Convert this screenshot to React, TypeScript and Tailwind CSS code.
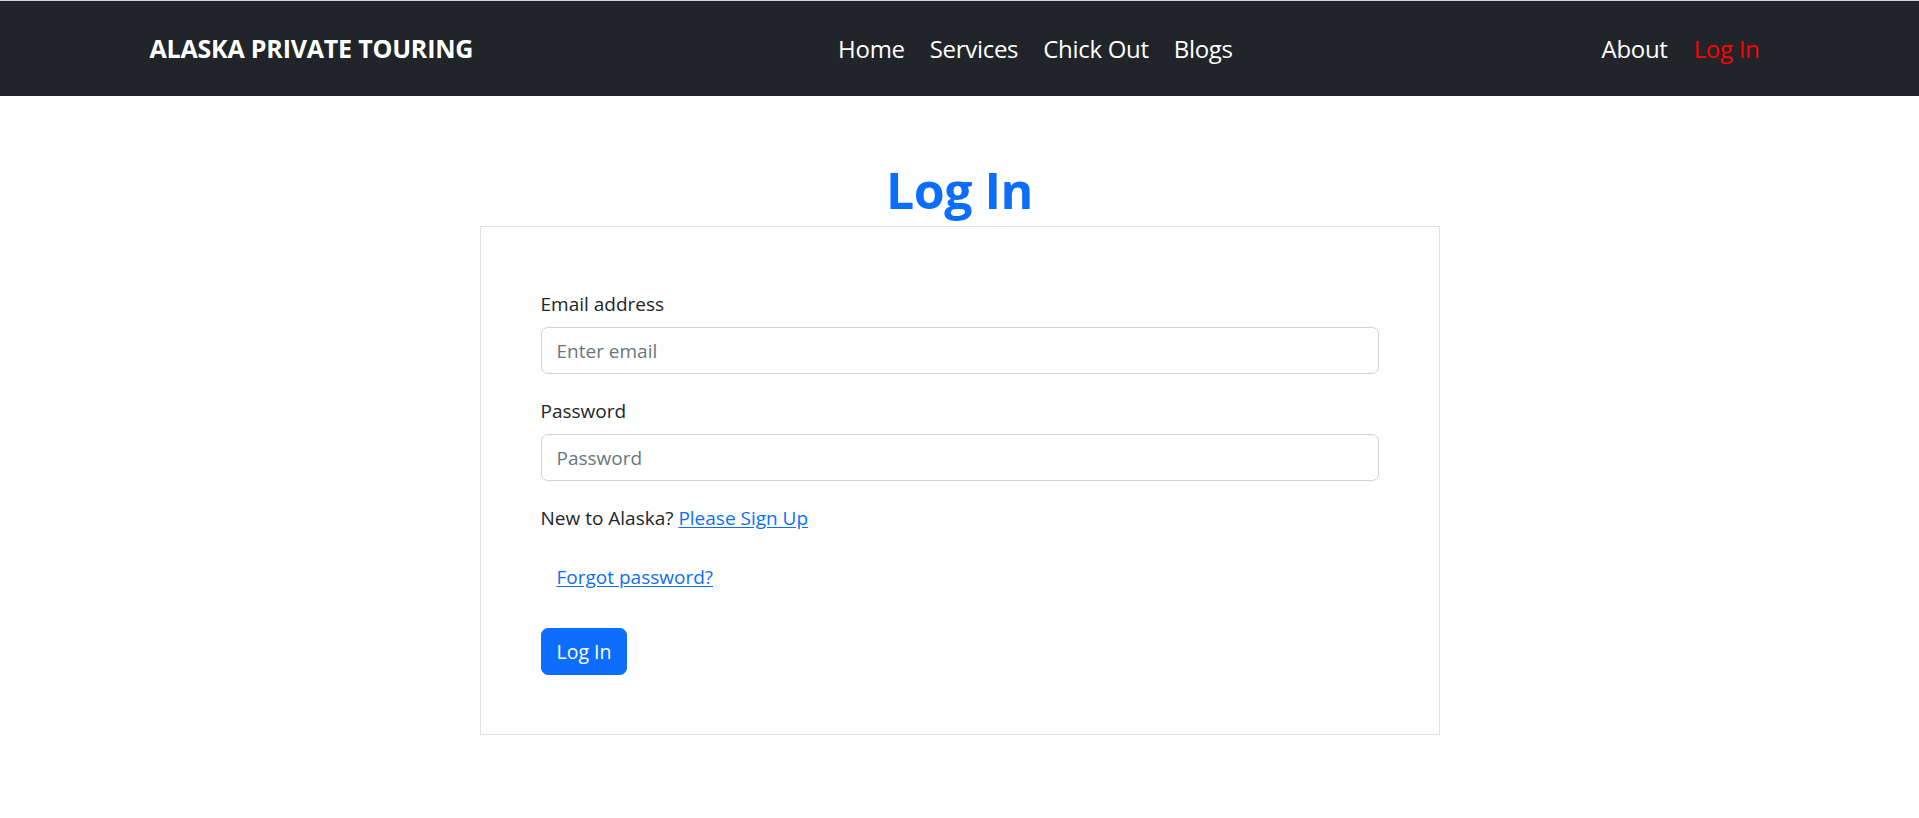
const font = { fontFamily: '"Open Sans", "Noto Sans", sans-serif' };

const NavBar = () => {
  return (
    <nav className="bg-[#212529] border-t border-[#d4d4d4]">
      <div className="mx-auto max-w-[1650px] px-[15px] h-[95px] flex items-center">
        <a className="text-white font-bold text-[25px] tracking-[-0.2px] mr-[6px] py-[6px]">
          ALASKA PRIVATE TOURING
        </a>
        <ul className="mx-auto flex items-center gap-[5px]">
          {["Home", "Services", "Chick Out", "Blogs"].map((item) => (
            <li key={item}>
              <a className="block px-[10px] py-[10px] text-white text-[24px] tracking-[-0.3px] leading-[30px]">
                {item}
              </a>
            </li>
          ))}
        </ul>
        <ul className="flex items-center gap-[6px]">
          <li>
            <a className="block px-[10px] py-[10px] text-white text-[24px] tracking-[-0.3px] leading-[30px]">
              About
            </a>
          </li>
          <li>
            <a className="block px-[10px] py-[10px] text-[#ff0000] text-[24px] tracking-[-0.3px] leading-[30px]">
              Log In
            </a>
          </li>
        </ul>
      </div>
    </nav>
  );
};

const LoginForm = () => {
  return (
    <div className="w-[960px] mx-auto border border-[#dee2e6] px-[60px] pt-[62px] pb-[59px] text-[#212529] text-[19px]">
      <div className="mb-[22px]">
        <label className="block mb-[8px] leading-[30px]">Email address</label>
        <input
          type="email"
          placeholder="Enter email"
          className="block w-full h-[47px] px-[15px] border border-[#ced4da] rounded-[7px] outline-none placeholder:text-[#6c757d]"
        />
      </div>
      <div className="mb-[22px]">
        <label className="block mb-[8px] leading-[30px]">Password</label>
        <input
          type="password"
          placeholder="Password"
          className="block w-full h-[47px] px-[15px] border border-[#ced4da] rounded-[7px] outline-none placeholder:text-[#6c757d]"
        />
      </div>
      <p className="mb-5 leading-[30px]">
        New to Alaska?{" "}
        <a className="text-[#0d6efd] underline underline-offset-2">Please Sign Up</a>
      </p>
      <p className="mb-[28px]">
        <button className="px-[15px] py-[7.5px] leading-[30px] border border-transparent text-[#0d6efd] underline underline-offset-2">
          Forgot password?
        </button>
      </p>
      <button className="bg-[#0d6efd] text-white rounded-[7px] px-[15px] h-[47px] leading-[30px] border border-[#0d6efd] text-[19.5px]">
        Log In
      </button>
    </div>
  );
};

export default function App() {
  return (
    <div className="min-h-screen bg-white" style={font}>
      <NavBar />
      <h1 className="mt-[64px] mb-[6px] text-center text-[#0d6efd] font-bold text-[50px] leading-[60px] tracking-[-0.5px]">
        Log In
      </h1>
      <LoginForm />
    </div>
  );
}
